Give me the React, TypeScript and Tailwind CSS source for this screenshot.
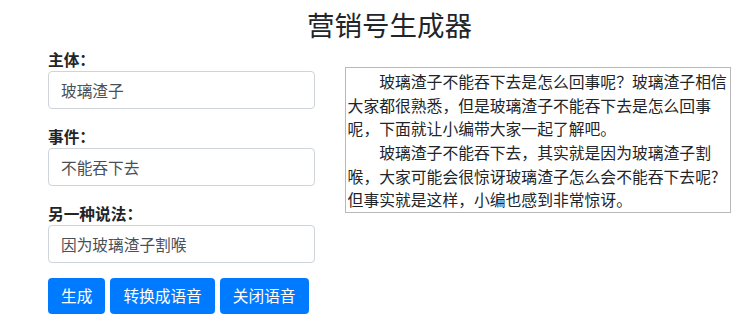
import React from "react";

const font = { fontFamily: '"Noto Sans CJK SC", "Noto Sans", sans-serif' };

// Form field: bold label over a Bootstrap-like text input
const Field = ({ label, value }: { label: string; value: string }) => (
  <div className="mb-[17px]">
    <label className="block h-[22px] text-[15.7px] leading-[22px] font-bold text-[#212529]">
      {label}
    </label>
    <input
      type="text"
      defaultValue={value}
      className="block w-full h-[38px] px-[12px] border border-[#ced4da] rounded-[4px] text-[15.7px] text-[#495057] bg-white outline-none"
      style={font}
    />
  </div>
);

const Btn = ({ text }: { text: string }) => (
  <button
    className="h-[36px] px-[13px] rounded-[4px] bg-[#007bff] text-white text-[15.7px] leading-[36px]"
    style={font}
  >
    {text}
  </button>
);

export default function App() {
  return (
    <div className="w-full h-[332px] bg-white overflow-hidden" style={font}>
      <div className="ml-[48px] w-[683px]">
        <h3 className="pt-[8px] text-center text-[27.5px] leading-[33px] font-normal text-[#212529]">
          营销号生成器
        </h3>

        <div className="flex items-start">
          {/* Inputs */}
          <div className="w-[267px] mt-[8px]">
            <Field label="主体：" value="玻璃渣子" />
            <Field label="事件：" value="不能吞下去" />
            <div className="mb-[15px]">
              <label className="block h-[22px] text-[15.7px] leading-[22px] font-bold text-[#212529]">
                另一种说法：
              </label>
              <input
                type="text"
                defaultValue="因为玻璃渣子割喉"
                className="block w-full h-[38px] px-[12px] border border-[#ced4da] rounded-[4px] text-[15.7px] text-[#495057] bg-white outline-none"
                style={font}
              />
            </div>
            <div className="flex gap-[5px]">
              <Btn text="生成" />
              <Btn text="转换成语音" />
              <Btn text="关闭语音" />
            </div>
          </div>

          {/* Generated article */}
          <div className="ml-[30px] mt-[26px] w-[387px] border border-[#b8b8b8] px-[2px] pt-[2px] text-[15.8px] leading-[1.5] text-[#212529]">
            <p className="indent-[2em]">
              玻璃渣子不能吞下去是怎么回事呢？玻璃渣子相信大家都很熟悉，但是玻璃渣子不能吞下去是怎么回事呢，下面就让小编带大家一起了解吧。
            </p>
            <p className="indent-[2em]">
              玻璃渣子不能吞下去，其实就是因为玻璃渣子割喉，大家可能会很惊讶玻璃渣子怎么会不能吞下去呢?但事实就是这样，小编也感到非常惊讶。
            </p>
          </div>
        </div>
      </div>
    </div>
  );
}
